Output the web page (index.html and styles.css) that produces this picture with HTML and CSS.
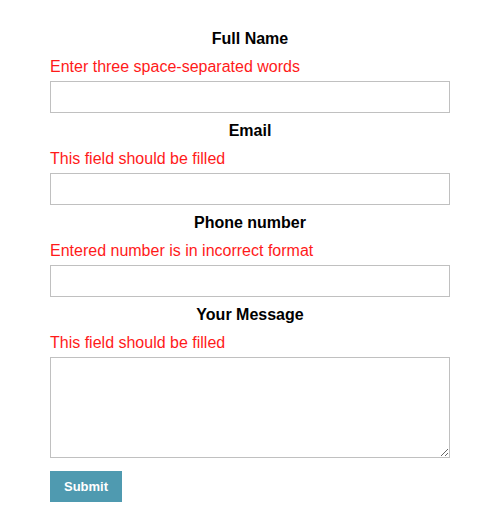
FILE: index.html
```html
<!DOCTYPE html>
<html>
<head>
<meta charset="utf-8">
<link rel="stylesheet" href="styles.css">
</head>
<body>
<form class="form">
  <div class="field">
    <label class="label">Full Name</label>
    <div class="error">Enter three space-separated words</div>
    <input class="input" type="text">
  </div>
  <div class="field">
    <label class="label">Email</label>
    <div class="error">This field should be filled</div>
    <input class="input" type="text">
  </div>
  <div class="field">
    <label class="label">Phone number</label>
    <div class="error">Entered number is in incorrect format</div>
    <input class="input" type="text">
  </div>
  <div class="field">
    <label class="label">Your Message</label>
    <div class="error">This field should be filled</div>
    <textarea class="textarea"></textarea>
  </div>
  <button class="submit" type="button">Submit</button>
</form>
</body>
</html>
```
FILE: styles.css
```css
html, body {
  margin: 0;
  padding: 0;
  background: #fff;
}
body {
  font-family: "Liberation Sans", Arial, sans-serif;
}
.form {
  width: 400px;
  margin: 0 auto;
  padding-top: 29px;
  display: flex;
  flex-direction: column;
}
.field {
  display: flex;
  flex-direction: column;
  margin-bottom: 8px;
}
.label {
  display: block;
  text-align: center;
  font-weight: bold;
  font-size: 16px;
  line-height: 18px;
  color: #000;
  padding-top: 1px;
  margin-bottom: 9px;
}
.error {
  font-size: 16px;
  line-height: 18px;
  color: #ff1a1a;
  padding-top: 1px;
  margin-bottom: 5px;
}
.input {
  box-sizing: border-box;
  width: 400px;
  height: 32px;
  border: 1px solid #c0c0c0;
  margin: 0;
  padding: 4px 8px;
  font-family: inherit;
  font-size: 16px;
  outline: none;
}
.textarea {
  box-sizing: border-box;
  width: 400px;
  height: 101px;
  border: 1px solid #c0c0c0;
  margin: 0;
  padding: 4px 8px;
  font-family: inherit;
  font-size: 16px;
  resize: vertical;
  outline: none;
  display: block;
}
.submit {
  align-self: flex-start;
  margin-top: 5px;
  width: 72px;
  height: 31px;
  background: #4f9ab0;
  color: #fff;
  border: none;
  font-family: inherit;
  font-weight: bold;
  font-size: 13px;
  padding: 0;
  cursor: pointer;
}
```
